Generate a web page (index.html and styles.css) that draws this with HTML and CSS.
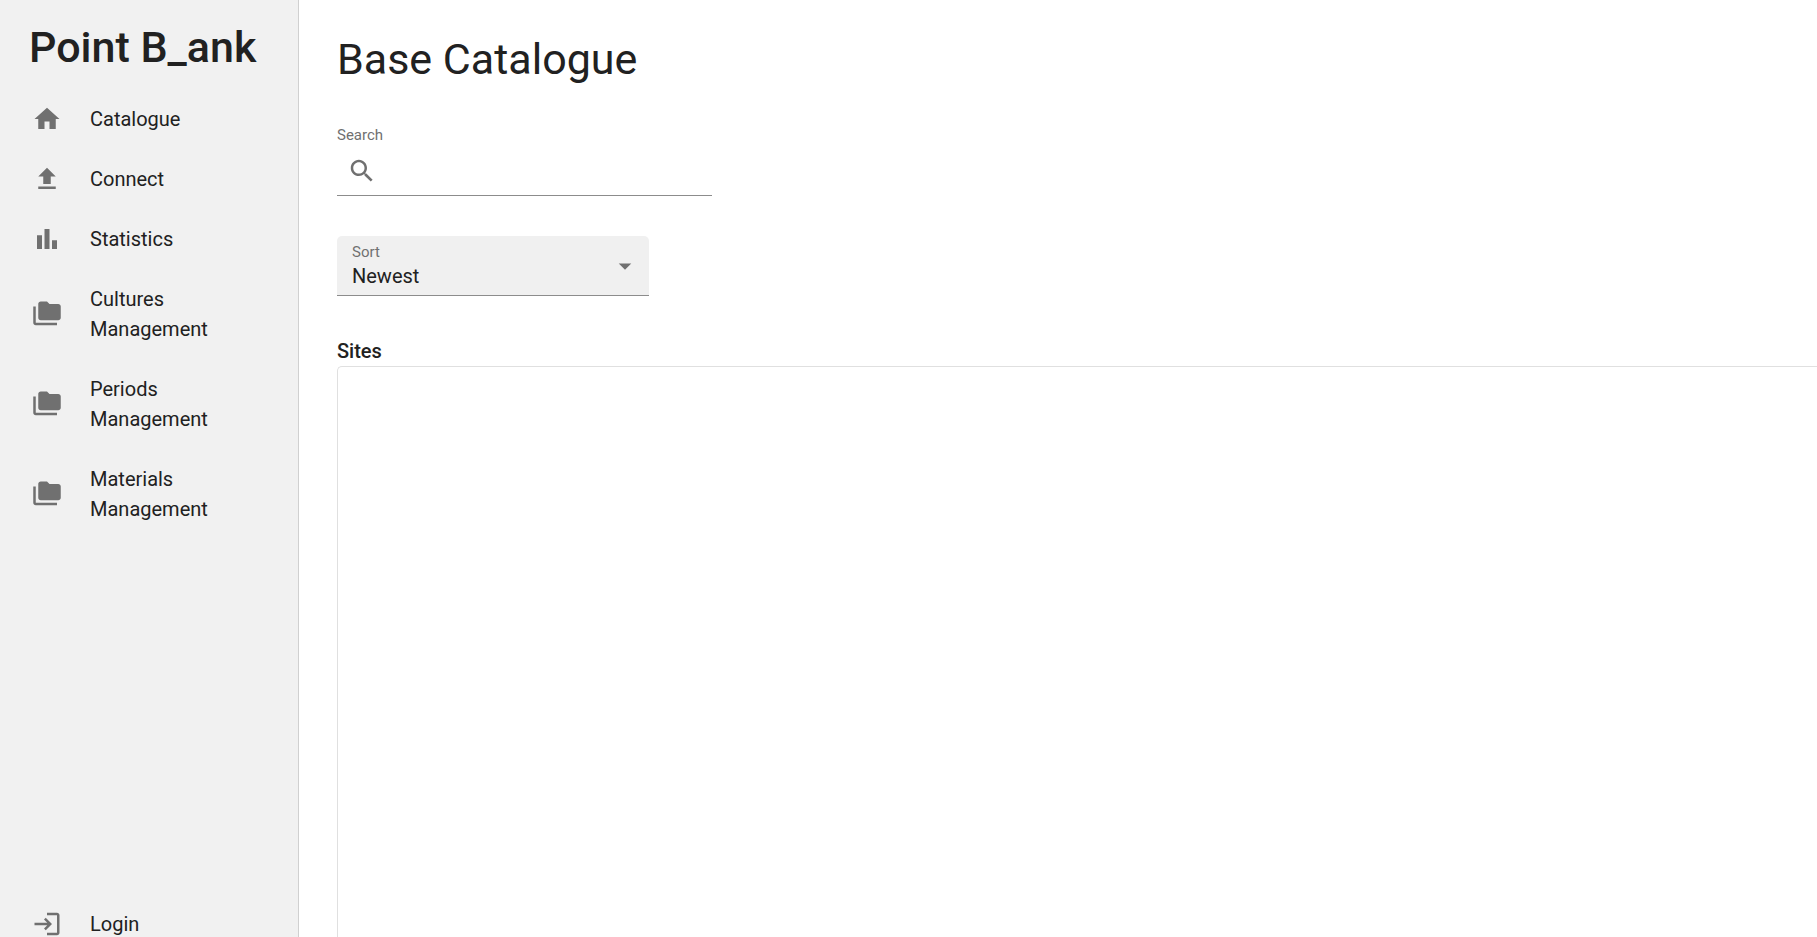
FILE: index.html
```html
<!DOCTYPE html>
<html lang="en">
	<head>
		<meta charset="UTF-8">
		<title>Point B_ank</title>
		<link rel="stylesheet" href="styles.css">
	</head>
	<body>
		<aside class="sidebar">
			<h2 class="brand">Point B_ank</h2>
			<nav class="menu">
				<a class="menu-item" href="#">
					<svg class="icon" viewBox="0 0 24 24"><path d="M10 20v-6h4v6h5v-8h3L12 3 2 12h3v8z"/></svg>
					<span>Catalogue</span>
				</a>
				<a class="menu-item" href="#">
					<svg class="icon" viewBox="0 0 24 24"><path d="M9 16h6v-6h4l-7-7-7 7h4zm-4 2h14v2H5z"/></svg>
					<span>Connect</span>
				</a>
				<a class="menu-item" href="#">
					<svg class="icon" viewBox="0 0 24 24"><path d="M4 9h4v11H4zm12 4h4v7h-4zm-6-9h4v16h-4z"/></svg>
					<span>Statistics</span>
				</a>
				<a class="menu-item" href="#">
					<svg class="icon" viewBox="0 0 24 24"><path d="M3 6H1v13c0 1.100.900 2 2 2h17v-2H3V6z"/><path d="M21 4h-7l-2-2H7c-1.100 0-1.990.900-1.990 2L5 15c0 1.100.900 2 2 2h14c1.100 0 2-.900 2-2V6c0-1.100-.900-2-2-2z"/></svg>
					<span>Cultures Management</span>
				</a>
				<a class="menu-item" href="#">
					<svg class="icon" viewBox="0 0 24 24"><path d="M3 6H1v13c0 1.100.900 2 2 2h17v-2H3V6z"/><path d="M21 4h-7l-2-2H7c-1.100 0-1.990.900-1.990 2L5 15c0 1.100.900 2 2 2h14c1.100 0 2-.900 2-2V6c0-1.100-.900-2-2-2z"/></svg>
					<span>Periods Management</span>
				</a>
				<a class="menu-item" href="#">
					<svg class="icon" viewBox="0 0 24 24"><path d="M3 6H1v13c0 1.100.900 2 2 2h17v-2H3V6z"/><path d="M21 4h-7l-2-2H7c-1.100 0-1.990.900-1.990 2L5 15c0 1.100.900 2 2 2h14c1.100 0 2-.900 2-2V6c0-1.100-.900-2-2-2z"/></svg>
					<span>Materials Management</span>
				</a>
			</nav>
			<a class="menu-item login" href="#">
				<svg class="icon" viewBox="0 0 24 24"><path d="M11 7 9.600 8.400l2.600 2.600H2v2h10.200l-2.600 2.600L11 17l5-5-5-5zm9 12h-8v2h8c1.100 0 2-.900 2-2V5c0-1.100-.900-2-2-2h-8v2h8v14z"/></svg>
				<span>Login</span>
			</a>
		</aside>

		<main class="content">
			<h1 class="title">Base Catalogue</h1>

			<div class="search">
				<label class="label" for="search">Search</label>
				<div class="search-field">
					<svg class="icon" viewBox="0 0 24 24"><path d="M15.500 14h-.790l-.280-.270C15.410 12.590 16 11.110 16 9.500 16 5.910 13.090 3 9.500 3S3 5.910 3 9.500 5.910 16 9.500 16c1.610 0 3.090-.590 4.230-1.570l.270.280v.790l5 4.990L20.490 19l-4.990-5zm-6 0C7.010 14 5 11.990 5 9.500S7.010 5 9.500 5 14 7.010 14 9.500 11.990 14 9.500 14z"/></svg>
					<input id="search" type="text">
				</div>
			</div>

			<div class="sort">
				<label class="label" for="sort">Sort</label>
				<select id="sort">
					<option>Newest</option>
				</select>
				<svg class="icon" viewBox="0 0 24 24"><path d="M7 10l5 5 5-5z"/></svg>
			</div>

			<h3 class="sites-title">Sites</h3>
			<section class="sites"></section>
		</main>
	</body>
</html>
```
FILE: styles.css
```css
*{
	margin: 0;
	padding: 0;
	box-sizing: border-box;
}
body{
	display: flex;
	height: 100vh;
	overflow: hidden;
	font-family: Roboto, "Liberation Sans", sans-serif;
	font-size: 20px;
	line-height: 30px;
	color: #212121;
	background-color: #fff;
}
.icon{
	width: 30px;
	height: 30px;
	flex: none;
	fill: #707070;
}

/* sidebar */
.sidebar{
	display: flex;
	flex-direction: column;
	flex: none;
	box-sizing: content-box;
	width: 298px;
	height: 100vh;
	padding-top: 17px;
	background-color: #f1f1f1;
	border-right: 1px solid #d0d0d0;
}
.brand{
	padding-left: 29px;
	margin-bottom: 12px;
	font-size: 43px;
	font-weight: 500;
	line-height: 60px;
}
.menu-item{
	display: flex;
	align-items: center;
	gap: 28px;
	padding: 15px 32px;
	color: #212121;
	text-decoration: none;
}
.login{
	margin-top: auto;
}

/* content */
.content{
	display: flex;
	flex-direction: column;
	flex: 1;
	min-width: 0;
	padding: 29px 0 0 38px;
}
.title{
	margin-bottom: 36px;
	font-size: 43px;
	font-weight: 400;
	line-height: 60px;
}
.label{
	display: block;
	font-size: 15px;
	line-height: 20px;
	color: #707070;
}
.search{
	width: 375px;
	margin-bottom: 40px;
}
.search-field{
	display: flex;
	padding: 11px 10px 9px;
	border-bottom: 1px solid #8c8c8c;
}
.search-field input{
	flex: 1;
	min-width: 0;
	padding-left: 10px;
	font: inherit;
	color: inherit;
	border: none;
	outline: none;
	background: none;
}
.sort{
	position: relative;
	width: 312px;
	margin-bottom: 40px;
}
.sort .label{
	position: absolute;
	top: 6px;
	left: 15px;
}
.sort select{
	display: block;
	width: 100%;
	height: 60px;
	padding: 20px 40px 0 15px;
	font: inherit;
	color: inherit;
	appearance: none;
	border: none;
	border-bottom: 1px solid #8c8c8c;
	border-radius: 5px 5px 0 0;
	outline: none;
	background-color: #f0f0f0;
}
.sort .icon{
	position: absolute;
	top: 15px;
	right: 9px;
	pointer-events: none;
}
.sites-title{
	font-size: 20px;
	font-weight: 500;
}
.sites{
	flex: 1;
	border: 1px solid #e0e0e0;
	border-width: 1px 0 0 1px;
	border-top-left-radius: 5px;
}
```
